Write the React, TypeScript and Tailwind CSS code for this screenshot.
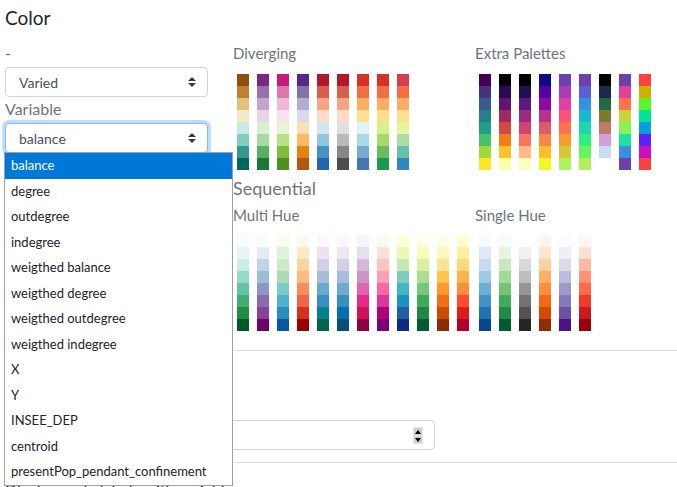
import React from "react";

const diverging = [
  ["#8c510a", "#bf812d", "#dfc27d", "#f6e8c3", "#c7eae5", "#80cdc1", "#35978f", "#01665e"],
  ["#762a83", "#9970ab", "#c2a5cf", "#e7d4e8", "#d9f0d3", "#a6dba0", "#5aae61", "#1b7837"],
  ["#c51b7d", "#de77ae", "#f1b6da", "#fde0ef", "#e6f5d0", "#b8e186", "#7fbc41", "#4d9221"],
  ["#542788", "#8073ac", "#b2abd2", "#d8daeb", "#fee0b6", "#fdb863", "#e08214", "#b35806"],
  ["#b2182b", "#d6604d", "#f4a582", "#fddbc7", "#d1e5f0", "#92c5de", "#4393c3", "#2166ac"],
  ["#b2182b", "#d6604d", "#f4a582", "#fddbc7", "#e0e0e0", "#bababa", "#878787", "#4d4d4d"],
  ["#d73027", "#f46d43", "#fdae61", "#fee090", "#e0f3f8", "#abd9e9", "#74add1", "#4575b4"],
  ["#d73027", "#f46d43", "#fdae61", "#fee08b", "#d9ef8b", "#a6d96a", "#66bd63", "#1a9850"],
  ["#d53e4f", "#f46d43", "#fdae61", "#fee08b", "#e6f598", "#abdda4", "#66c2a5", "#3288bd"],
];

const extra = [
  ["#440154", "#46327e", "#365c8d", "#277f8e", "#1fa187", "#4ac16d", "#a0da39", "#fde725"],
  ["#000004", "#280b53", "#65156e", "#9f2a63", "#d44842", "#f57d15", "#fac228", "#fcffa4"],
  ["#000004", "#221150", "#5f187f", "#982d80", "#d3436e", "#f8765c", "#febb81", "#fcfdbf"],
  ["#0d0887", "#5302a3", "#8b0aa5", "#b83289", "#db5c68", "#f48849", "#febd2a", "#f0f921"],
  ["#6e40aa", "#a83cb3", "#df40a1", "#ff507a", "#ff704e", "#f89b31", "#d2c934", "#aff05b"],
  ["#6e40aa", "#5a5fd6", "#3890e3", "#1db8d0", "#1bd8b0", "#2ef07f", "#64f55f", "#aff05b"],
  ["#000000", "#1a2849", "#1d6a45", "#7a7a33", "#c17a6a", "#d09fdc", "#c6ddf1", "#ffffff"],
  ["#6e40aa", "#e1409c", "#ff7447", "#cbd23b", "#85f552", "#1ee1a0", "#3a8ee3", "#6e40aa"],
  ["#ff4040", "#cfb000", "#5af726", "#00e39a", "#069ede", "#5a22ff", "#c90fc0", "#ff4040"],
];

const multiHue = [
  ["#f7fcfd", "#e5f5f9", "#ccece6", "#99d8c9", "#66c2a4", "#41ae76", "#238b45", "#005824"],
  ["#f7fcfd", "#e0ecf4", "#bfd3e6", "#9ebcda", "#8c96c6", "#8c6bb1", "#88419d", "#6e016b"],
  ["#f7fcf0", "#e0f3db", "#ccebc5", "#a8ddb5", "#7bccc4", "#4eb3d3", "#2b8cbe", "#08589e"],
  ["#fff7ec", "#fee8c8", "#fdd49e", "#fdbb84", "#fc8d59", "#ef6548", "#d7301f", "#990000"],
  ["#fff7fb", "#ece2f0", "#d0d1e6", "#a6bddb", "#67a9cf", "#3690c0", "#02818a", "#016450"],
  ["#fff7fb", "#ece7f2", "#d0d1e6", "#a6bddb", "#74a9cf", "#3690c0", "#0570b0", "#034e7b"],
  ["#f7f4f9", "#e7e1ef", "#d4b9da", "#c994c7", "#df65b0", "#e7298a", "#ce1256", "#91003f"],
  ["#fff7f3", "#fde0dd", "#fcc5c0", "#fa9fb5", "#f768a1", "#dd3497", "#ae017e", "#7a0177"],
  ["#ffffd9", "#edf8b1", "#c7e9b4", "#7fcdbb", "#41b6c4", "#1d91c0", "#225ea8", "#0c2c84"],
  ["#ffffe5", "#f7fcb9", "#d9f0a3", "#addd8e", "#78c679", "#41ab5d", "#238443", "#005a32"],
  ["#ffffe5", "#fff7bc", "#fee391", "#fec44f", "#fe9929", "#ec7014", "#cc4c02", "#8c2d04"],
  ["#ffffcc", "#ffeda0", "#fed976", "#feb24c", "#fd8d3c", "#fc4e2a", "#e31a1c", "#b10026"],
];

const singleHue = [
  ["#f7fbff", "#deebf7", "#c6dbef", "#9ecae1", "#6baed6", "#4292c6", "#2171b5", "#084594"],
  ["#f7fcf5", "#e5f5e0", "#c7e9c0", "#a1d99b", "#74c476", "#41ab5d", "#238b45", "#005a32"],
  ["#ffffff", "#f0f0f0", "#d9d9d9", "#bdbdbd", "#969696", "#737373", "#525252", "#252525"],
  ["#fff5eb", "#fee6ce", "#fdd0a2", "#fdae6b", "#fd8d3c", "#f16913", "#d94801", "#8c2d04"],
  ["#fcfbfd", "#efedf5", "#dadaeb", "#bcbddc", "#9e9ac8", "#807dba", "#6a51a3", "#4a1486"],
  ["#fff5f0", "#fee0d2", "#fcbba1", "#fc9272", "#fb6a4a", "#ef3b2c", "#cb181d", "#99000d"],
];

const variables = [
  "balance",
  "degree",
  "outdegree",
  "indegree",
  "weigthed balance",
  "weigthed degree",
  "weigthed outdegree",
  "weigthed indegree",
  "X",
  "Y",
  "INSEE_DEP",
  "centroid",
  "presentPop_pendant_confinement",
];

const Palettes = ({ schemes }: { schemes: string[][] }) => (
  <div className="flex gap-2 pl-1">
    {schemes.map((scheme, i) => (
      <div key={i} className="flex flex-col cursor-pointer">
        {scheme.map((c, j) => (
          <div key={j} className="w-3 h-3" style={{ backgroundColor: c }} />
        ))}
      </div>
    ))}
  </div>
);

const Caret = () => (
  <svg width="8" height="10" viewBox="0 0 4 5" className="absolute right-[11px] top-1/2 -translate-y-1/2">
    <path fill="#343a40" d="M2 0L0 2h4zm0 5L0 3h4z" />
  </svg>
);

const Select = ({ value, focused }: { value: string; focused?: boolean }) => (
  <div
    className={
      focused
        ? "relative h-[30px] rounded border border-[#80bdff] shadow-[0_0_0_3px_rgba(0,123,255,0.25)] bg-white flex items-center pl-[13px] text-[14px] text-[#495057]"
        : "relative h-[30px] rounded border border-[#ced4da] bg-white flex items-center pl-[13px] text-[14px] text-[#495057]"
    }
  >
    {value}
    <Caret />
  </div>
);

export default function App() {
  return (
    <div className="relative w-[677px] h-[487px] overflow-hidden bg-white font-['Lato','Liberation_Sans',sans-serif] text-[#212529]">
      <div className="px-[5px] pt-[6px]">
        <h2 className="text-[19px] leading-[24px]">Color</h2>

        <div className="flex mt-[12px]">
          <div className="w-[203px] shrink-0">
            <div className="text-[16px] leading-[22px] text-[#6c757d] h-[25px]">-</div>
            <Select value="Varied" />
            <div className="text-[16px] leading-[22px] text-[#6c757d] mt-[1px] h-[25px]">Variable</div>
            <Select value="balance" focused />
          </div>

          <div className="ml-[25px] flex-1">
            <div className="flex">
              <div className="w-[242px]">
                <div className="text-[15px] leading-[22px] text-[#6c757d]">Diverging</div>
                <div className="mt-[10px]">
                  <Palettes schemes={diverging} />
                </div>
              </div>
              <div className="flex-1">
                <div className="text-[15px] leading-[22px] text-[#6c757d]">Extra Palettes</div>
                <div className="mt-[10px]">
                  <Palettes schemes={extra} />
                </div>
              </div>
            </div>

            <div className="text-[18px] leading-[24px] text-[#6c757d] mt-[6px]">Sequential</div>
            <div className="flex mt-[4px]">
              <div className="w-[242px]">
                <div className="text-[15px] leading-[22px] text-[#6c757d]">Multi Hue</div>
                <div className="mt-[9px]">
                  <Palettes schemes={multiHue} />
                </div>
              </div>
              <div className="flex-1">
                <div className="text-[15px] leading-[22px] text-[#6c757d]">Single Hue</div>
                <div className="mt-[9px]">
                  <Palettes schemes={singleHue} />
                </div>
              </div>
            </div>
          </div>
        </div>

        <hr className="mt-[19px] -mr-[5px] border-t border-[#e2e2e2]" />

        <div className="h-[69px]" />
        <div className="relative w-[430px] h-[30px] rounded border border-[#ced4da] bg-white">
          <div className="absolute right-[11px] top-[6px] flex flex-col gap-[1px] bg-[#e6e6e6] p-[1px]">
            <div className="w-[8px] h-[7px] bg-[#cfcfcf] flex items-center justify-center">
              <svg width="6" height="4" viewBox="0 0 6 4">
                <path d="M3 0L6 4H0z" fill="#000" />
              </svg>
            </div>
            <div className="w-[8px] h-[7px] bg-[#cfcfcf] flex items-center justify-center">
              <svg width="6" height="4" viewBox="0 0 6 4">
                <path d="M0 0H6L3 4z" fill="#000" />
              </svg>
            </div>
          </div>
        </div>
        <hr className="mt-[12px] -mr-[5px] border-t border-[#e2e2e2]" />
        <div className="mt-[16px] text-[16px] leading-[22px]">Display node labels with variable</div>
      </div>

      {/* native select popup */}
      <ul className="absolute left-[4px] top-[152px] w-[229px] border border-[#a0a0a0] bg-white text-[13px] text-[#212529]">
        {variables.map((v, i) => (
          <li
            key={v}
            className={
              i === 0
                ? "h-[25.5px] flex items-center pl-[6px] bg-[#0078d7] text-white"
                : "h-[25.5px] flex items-center pl-[6px]"
            }
          >
            {v}
          </li>
        ))}
      </ul>
    </div>
  );
}
